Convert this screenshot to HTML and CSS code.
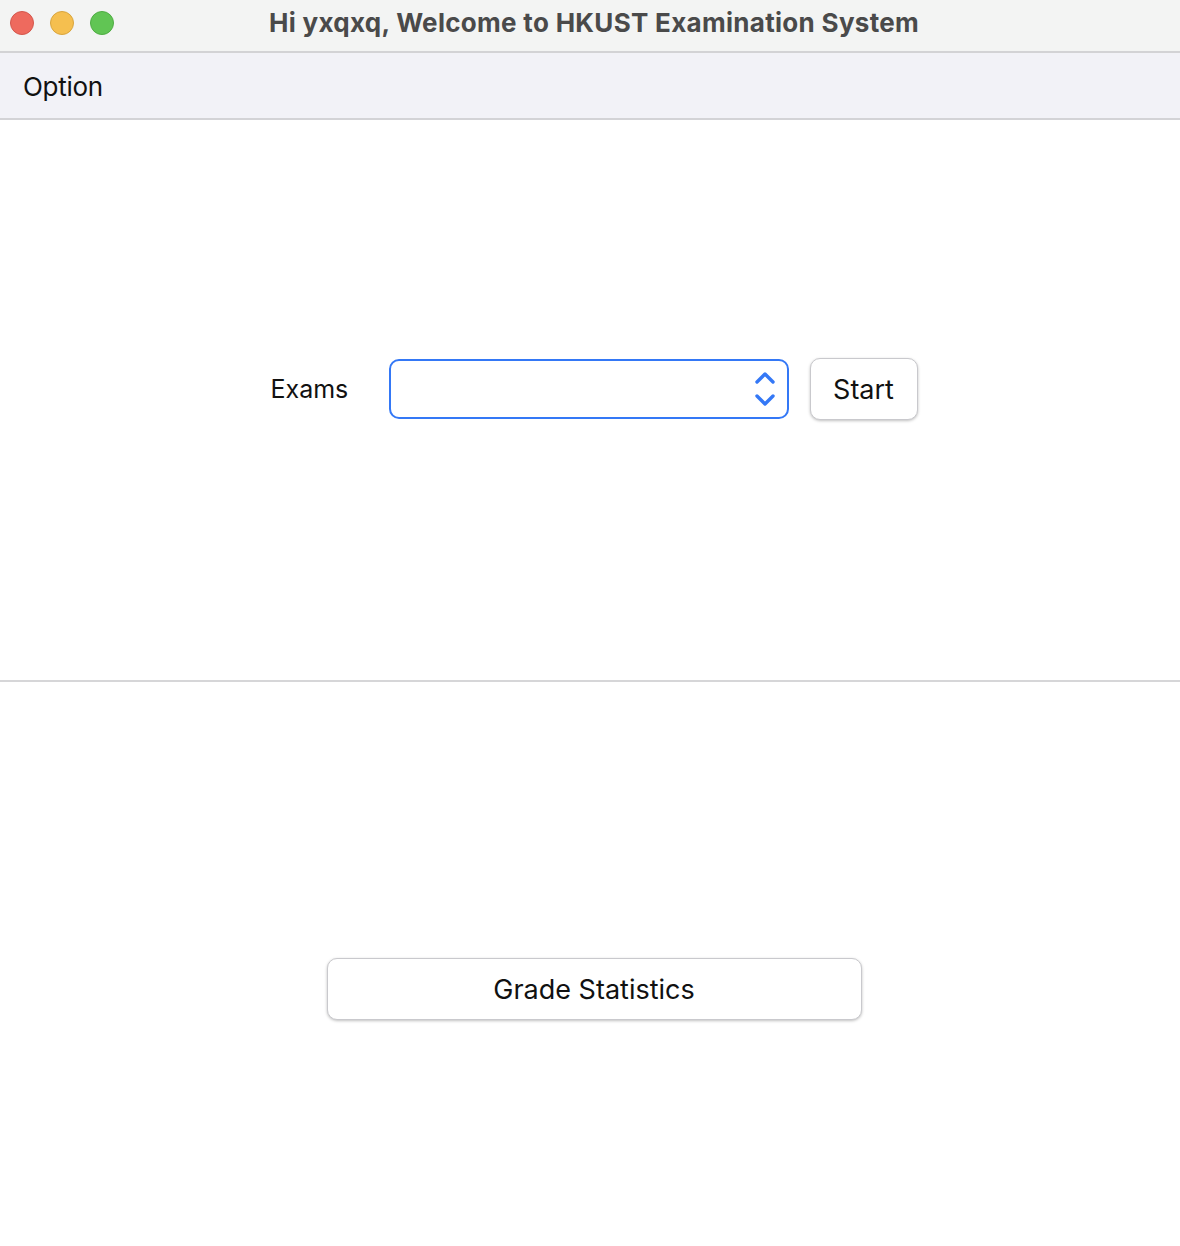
FILE: index.html
```html
<!DOCTYPE html>
<html>
<head>
<meta charset="utf-8">
<link rel="stylesheet" href="styles.css">
</head>
<body>
<div class="window">
  <div class="titlebar">
    <div class="lights">
      <span class="light red"></span>
      <span class="light yellow"></span>
      <span class="light green"></span>
    </div>
    <div class="title">Hi yxqxq, Welcome to HKUST Examination System</div>
  </div>
  <div class="menubar"><span class="menu-item">Option</span></div>
  <div class="top-pane">
    <div class="exam-row">
      <span class="label">Exams</span>
      <div class="combo">
        <svg class="spin" width="22" height="42" viewBox="0 0 22 42">
          <path d="M3 14 L11 6 L19 14" fill="none" stroke="#3478f6" stroke-width="3.4" stroke-linecap="round" stroke-linejoin="round"/>
          <path d="M3 28 L11 36 L19 28" fill="none" stroke="#3478f6" stroke-width="3.4" stroke-linecap="round" stroke-linejoin="round"/>
        </svg>
      </div>
      <button class="btn start">Start</button>
    </div>
  </div>
  <div class="bottom-pane">
    <button class="btn grade">Grade Statistics</button>
  </div>
</div>
</body>
</html>
```
FILE: styles.css
```css
* { box-sizing: border-box; }
html, body { margin: 0; padding: 0; background: #ffffff; }
body { font-family: Inter, "Noto Sans", "Liberation Sans", sans-serif; color: #111; }
.window { width: 1180px; height: 1246px; display: flex; flex-direction: column; }
.titlebar {
  height: 53px; background: #f3f4f3; border-bottom: 2px solid #d3d3d5;
  position: relative; display: flex; align-items: center; justify-content: center;
}
.lights { position: absolute; left: 10px; top: 11px; display: flex; gap: 16px; }
.light { width: 24px; height: 24px; border-radius: 50%; display: block; }
.red { background: #ee6a5e; border: 1px solid #d4574c; }
.yellow { background: #f5bf4f; border: 1px solid #d9a53d; }
.green { background: #61c554; border: 1px solid #4fad43; }
.title { font-weight: 700; font-size: 26px; color: #4a4a4a; margin-top: -6px; margin-left: 8px; letter-spacing: 0.3px; }
.menubar {
  height: 67px; background: #f2f2f7; border-bottom: 2px solid #d3d3d6;
  display: flex; align-items: center; padding-left: 23px;
}
.menu-item { font-size: 26px; color: #111; margin-top: 2px; letter-spacing: -0.3px; }
.top-pane {
  height: 562px; border-bottom: 2px solid #d6d6d8;
  display: flex; justify-content: center; padding-top: 238px;
}
.exam-row { display: flex; align-items: center; height: 62px; margin-left: 8px; }
.label { font-size: 25px; width: 118px; color: #111; }
.combo {
  width: 400px; height: 60px; border: 2px solid #3478f6; border-radius: 10px;
  display: flex; align-items: center; justify-content: flex-end; padding-right: 11px;
}
.btn {
  font-family: inherit; font-size: 27px; color: #111; background: #fff;
  border: 1px solid #c9c9cd; border-radius: 10px;
  box-shadow: 0 1px 3px rgba(0,0,0,0.25);
}
.start { width: 108px; height: 62px; margin-left: 21px; }
.bottom-pane { flex: 1; display: flex; justify-content: center; padding-top: 276px; }
.grade { width: 535px; height: 62px; margin-left: 8px; }
```
